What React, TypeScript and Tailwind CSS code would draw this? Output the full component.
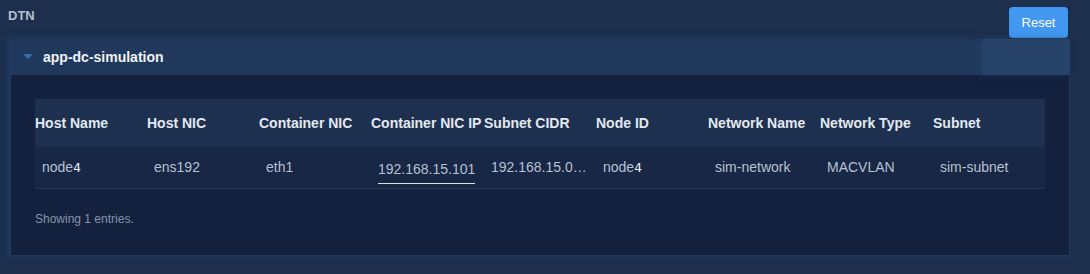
import React from 'react';

const columns = [
  { label: 'Host Name', w: 'w-[112px]' },
  { label: 'Host NIC', w: 'w-[112px]' },
  { label: 'Container NIC', w: 'w-[112px]' },
  { label: 'Container NIC IP', w: 'w-[113px]' },
  { label: 'Subnet CIDR', w: 'w-[112px]' },
  { label: 'Node ID', w: 'w-[112px]' },
  { label: 'Network Name', w: 'w-[112px]' },
  { label: 'Network Type', w: 'w-[113px]' },
  { label: 'Subnet', w: 'w-[112px]' },
];

const NodeName: React.FC = () => (
  <span>
    node<span className="font-['DejaVu_Sans',sans-serif] text-[12px] text-[#f4f6fa]">4</span>
  </span>
);

const App: React.FC = () => {
  const row: React.ReactNode[] = [
    <NodeName />,
    'ens192',
    'eth1',
    <span className="inline-block border-b border-[#dcdcdc] pb-[3px]">192.168.15.101</span>,
    '192.168.15.0/24',
    <NodeName />,
    'sim-network',
    'MACVLAN',
    'sim-subnet',
  ];

  return (
    <div className="w-[1090px] h-[274px] bg-[#1e2f4e] font-['Liberation_Sans',Arial,sans-serif] overflow-hidden">
      {/* Top bar */}
      <div className="flex justify-between items-start pl-[8px] pr-[22px]">
        <span className="pt-[8px] text-[13px] leading-[16px] font-bold text-[#b4bfcf]">DTN</span>
        <button className="mt-[7px] h-[31px] w-[59px] rounded-[4px] bg-[#4298f0] text-white text-[13px]">
          Reset
        </button>
      </div>

      {/* Panel */}
      <div className="ml-[10px] mt-px w-[1060px] shadow-[-3px_0_6px_rgba(30,70,120,0.5)]">
        <div className="flex h-[36px]">
          <div className="flex-1 flex items-center bg-[#1f385c] pl-[13px]">
            <svg width="10" height="6" viewBox="0 0 10 6" className="mr-[10px]">
              <path d="M0 0 L10 0 L5 5 Z" fill="#2f6fb5" />
            </svg>
            <span className="text-[14px] font-bold text-[#eef2f7]">app-dc-simulation</span>
          </div>
          <div className="w-[87px] bg-[#27436a] shadow-[-4px_0_6px_rgba(39,67,106,0.6)]" />
        </div>

        <div className="h-[181px] bg-[#13213e] border border-t-0 border-[#22395e] pl-[24px] pt-[24px]">
          <div className="w-[1010px]">
            <div className="flex h-[48px] items-center bg-[#1e3050]">
              {columns.map((c) => (
                <div key={c.label} className={`${c.w} shrink-0 text-[14px] font-bold text-[#e2e8f0] whitespace-nowrap`}>
                  {c.label}
                </div>
              ))}
            </div>
            <div className="flex h-[42px] items-center bg-[#172745] border-b border-[#1f3455]">
              {row.map((v, i) => (
                <div
                  key={i}
                  className={`${columns[i].w} shrink-0 pl-[7px] pr-[8px] text-[14px] text-[#b6c1d2] whitespace-nowrap overflow-hidden text-ellipsis ${i === 3 ? 'pt-[8px]' : ''}`}
                >
                  {v}
                </div>
              ))}
            </div>
          </div>
          <div className="mt-[22px] text-[12px] leading-[16px] text-[#8893a8]">Showing 1 entries.</div>
        </div>
      </div>
    </div>
  );
};

export default App;
